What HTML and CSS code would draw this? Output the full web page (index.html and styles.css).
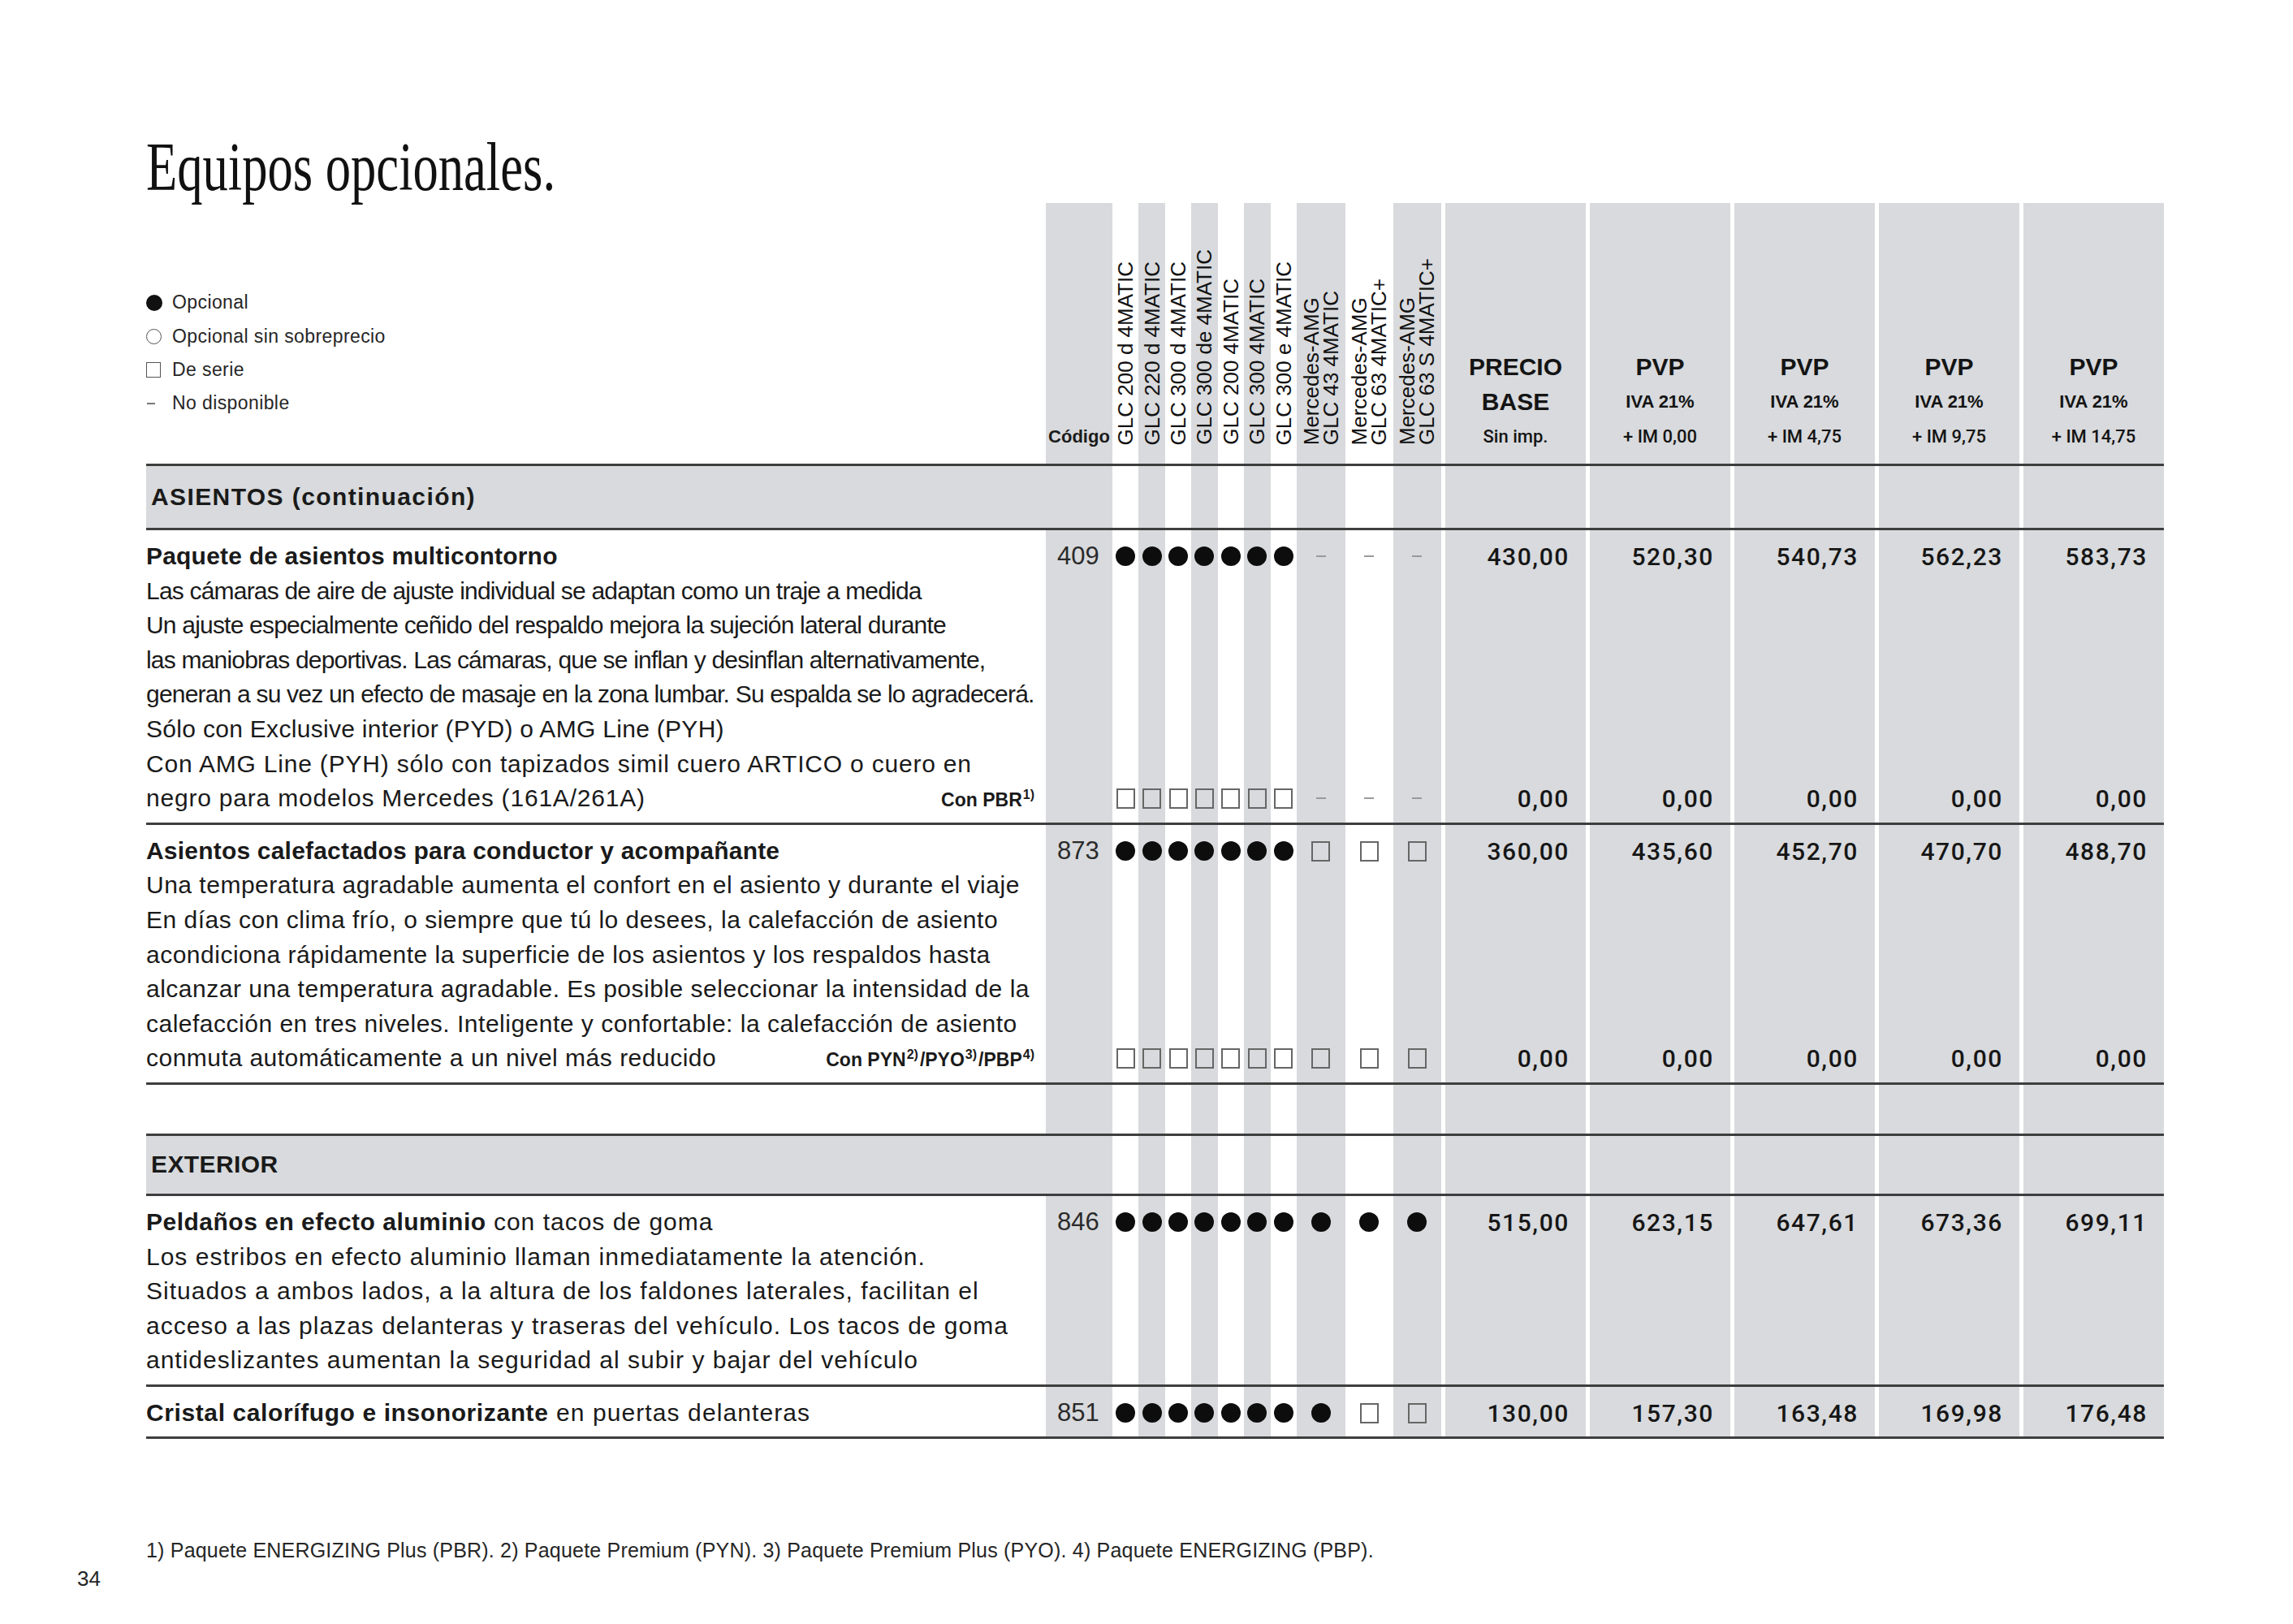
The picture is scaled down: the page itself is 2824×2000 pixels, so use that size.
FILE: index.html
```html
<!DOCTYPE html>
<html lang="es">
<head>
<meta charset="utf-8">
<title>Equipos opcionales</title>
<link rel="stylesheet" href="styles.css">
</head>
<body>
<div class="page">
  <h1 class="title">Equipos opcionales.</h1>

  <div class="table">
    <!-- header -->
    <div class="row head">
      <div class="desc">
        <div class="legend">
          <div class="lg"><span class="mk"><i class="ldot"></i></span>Opcional</div>
          <div class="lg"><span class="mk"><i class="lcirc"></i></span>Opcional sin sobreprecio</div>
          <div class="lg"><span class="mk"><i class="lsq"></i></span>De serie</div>
          <div class="lg"><span class="mk"><i class="ldash"></i></span>No disponible</div>
        </div>
      </div>
      <div class="s codeh"><span>Código</span></div>
      <div class="vh"><span class="vt">GLC 200 d 4MATIC</span></div>
      <div class="s vh"><span class="vt">GLC 220 d 4MATIC</span></div>
      <div class="vh"><span class="vt">GLC 300 d 4MATIC</span></div>
      <div class="s vh"><span class="vt">GLC 300 de 4MATIC</span></div>
      <div class="vh"><span class="vt">GLC 200 4MATIC</span></div>
      <div class="s vh"><span class="vt">GLC 300 4MATIC</span></div>
      <div class="vh"><span class="vt">GLC 300 e 4MATIC</span></div>
      <div class="s vh"><span class="vt">Mercedes-AMG<br>GLC 43 4MATIC</span></div>
      <div class="vh"><span class="vt">Mercedes-AMG<br>GLC 63 4MATIC+</span></div>
      <div class="s vh"><span class="vt">Mercedes-AMG<br>GLC 63 S 4MATIC+</span></div>
      <div class="p ph"><span class="big">PRECIO</span><span class="big">BASE</span><span class="sm">Sin imp.</span></div>
      <div class="p ph"><span class="big">PVP</span><span class="smb">IVA 21%</span><span class="sm">+ IM 0,00</span></div>
      <div class="p ph"><span class="big">PVP</span><span class="smb">IVA 21%</span><span class="sm">+ IM 4,75</span></div>
      <div class="p ph"><span class="big">PVP</span><span class="smb">IVA 21%</span><span class="sm">+ IM 9,75</span></div>
      <div class="p ph"><span class="big">PVP</span><span class="smb">IVA 21%</span><span class="sm">+ IM 14,75</span></div>
    </div>

    <!-- section ASIENTOS -->
    <div class="row band b1">
      <div class="s desc sect sect-a">ASIENTOS (continuación)</div>
      <div class="s"></div>
      <div></div><div class="s"></div><div></div><div class="s"></div><div></div><div class="s"></div><div></div>
      <div class="s"></div><div></div><div class="s"></div>
      <div class="p"></div><div class="p"></div><div class="p"></div><div class="p"></div><div class="p"></div>
    </div>

    <!-- item 409 -->
    <div class="row item">
      <div class="desc">
        <div class="ln t">Paquete de asientos multicontorno</div>
        <div class="ln r1">Las cámaras de aire de ajuste individual se adaptan como un traje a medida</div>
        <div class="ln r1">Un ajuste especialmente ceñido del respaldo mejora la sujeción lateral durante</div>
        <div class="ln r1">las maniobras deportivas. Las cámaras, que se inflan y desinflan alternativamente,</div>
        <div class="ln r1">generan a su vez un efecto de masaje en la zona lumbar. Su espalda se lo agradecerá.</div>
        <div class="ln r1b">Sólo con Exclusive interior (PYD) o AMG Line (PYH)</div>
        <div class="ln">Con AMG Line (PYH) sólo con tapizados simil cuero ARTICO o cuero en</div>
        <div class="ln last"><span>negro para modelos Mercedes (161A/261A)</span><span class="con">Con PBR<sup>1)</sup></span></div>
      </div>
      <div class="s code"><div class="slot">409</div></div>
      <div class="sym"><div class="slot"><i class="dot"></i></div><div class="slot"><i class="sq"></i></div></div>
      <div class="s sym"><div class="slot"><i class="dot"></i></div><div class="slot"><i class="sq"></i></div></div>
      <div class="sym"><div class="slot"><i class="dot"></i></div><div class="slot"><i class="sq"></i></div></div>
      <div class="s sym"><div class="slot"><i class="dot"></i></div><div class="slot"><i class="sq"></i></div></div>
      <div class="sym"><div class="slot"><i class="dot"></i></div><div class="slot"><i class="sq"></i></div></div>
      <div class="s sym"><div class="slot"><i class="dot"></i></div><div class="slot"><i class="sq"></i></div></div>
      <div class="sym"><div class="slot"><i class="dot"></i></div><div class="slot"><i class="sq"></i></div></div>
      <div class="s sym"><div class="slot"><i class="dash"></i></div><div class="slot"><i class="dash"></i></div></div>
      <div class="sym"><div class="slot"><i class="dash"></i></div><div class="slot"><i class="dash"></i></div></div>
      <div class="s sym"><div class="slot"><i class="dash"></i></div><div class="slot"><i class="dash"></i></div></div>
      <div class="p price"><div class="slot">430,00</div><div class="slot">0,00</div></div>
      <div class="p price"><div class="slot">520,30</div><div class="slot">0,00</div></div>
      <div class="p price"><div class="slot">540,73</div><div class="slot">0,00</div></div>
      <div class="p price"><div class="slot">562,23</div><div class="slot">0,00</div></div>
      <div class="p price"><div class="slot">583,73</div><div class="slot">0,00</div></div>
    </div>

    <!-- item 873 -->
    <div class="row item">
      <div class="desc r2">
        <div class="ln t">Asientos calefactados para conductor y acompañante</div>
        <div class="ln">Una temperatura agradable aumenta el confort en el asiento y durante el viaje</div>
        <div class="ln">En días con clima frío, o siempre que tú lo desees, la calefacción de asiento</div>
        <div class="ln">acondiciona rápidamente la superficie de los asientos y los respaldos hasta</div>
        <div class="ln">alcanzar una temperatura agradable. Es posible seleccionar la intensidad de la</div>
        <div class="ln">calefacción en tres niveles. Inteligente y confortable: la calefacción de asiento</div>
        <div class="ln last"><span>conmuta automáticamente a un nivel más reducido</span><span class="con">Con PYN<sup>2)</sup>/PYO<sup>3)</sup>/PBP<sup>4)</sup></span></div>
      </div>
      <div class="s code"><div class="slot">873</div></div>
      <div class="sym"><div class="slot"><i class="dot"></i></div><div class="slot"><i class="sq"></i></div></div>
      <div class="s sym"><div class="slot"><i class="dot"></i></div><div class="slot"><i class="sq"></i></div></div>
      <div class="sym"><div class="slot"><i class="dot"></i></div><div class="slot"><i class="sq"></i></div></div>
      <div class="s sym"><div class="slot"><i class="dot"></i></div><div class="slot"><i class="sq"></i></div></div>
      <div class="sym"><div class="slot"><i class="dot"></i></div><div class="slot"><i class="sq"></i></div></div>
      <div class="s sym"><div class="slot"><i class="dot"></i></div><div class="slot"><i class="sq"></i></div></div>
      <div class="sym"><div class="slot"><i class="dot"></i></div><div class="slot"><i class="sq"></i></div></div>
      <div class="s sym"><div class="slot"><i class="sq"></i></div><div class="slot"><i class="sq"></i></div></div>
      <div class="sym"><div class="slot"><i class="sq"></i></div><div class="slot"><i class="sq"></i></div></div>
      <div class="s sym"><div class="slot"><i class="sq"></i></div><div class="slot"><i class="sq"></i></div></div>
      <div class="p price"><div class="slot">360,00</div><div class="slot">0,00</div></div>
      <div class="p price"><div class="slot">435,60</div><div class="slot">0,00</div></div>
      <div class="p price"><div class="slot">452,70</div><div class="slot">0,00</div></div>
      <div class="p price"><div class="slot">470,70</div><div class="slot">0,00</div></div>
      <div class="p price"><div class="slot">488,70</div><div class="slot">0,00</div></div>
    </div>

    <!-- spacer -->
    <div class="row spacer">
      <div class="desc"></div>
      <div class="s"></div>
      <div></div><div class="s"></div><div></div><div class="s"></div><div></div><div class="s"></div><div></div>
      <div class="s"></div><div></div><div class="s"></div>
      <div class="p"></div><div class="p"></div><div class="p"></div><div class="p"></div><div class="p"></div>
    </div>

    <!-- section EXTERIOR -->
    <div class="row band b2">
      <div class="s desc sect">EXTERIOR</div>
      <div class="s"></div>
      <div></div><div class="s"></div><div></div><div class="s"></div><div></div><div class="s"></div><div></div>
      <div class="s"></div><div></div><div class="s"></div>
      <div class="p"></div><div class="p"></div><div class="p"></div><div class="p"></div><div class="p"></div>
    </div>

    <!-- item 846 -->
    <div class="row item">
      <div class="desc r3">
        <div class="ln"><b class="tb">Peldaños en efecto aluminio</b> con tacos de goma</div>
        <div class="ln">Los estribos en efecto aluminio llaman inmediatamente la atención.</div>
        <div class="ln">Situados a ambos lados, a la altura de los faldones laterales, facilitan el</div>
        <div class="ln">acceso a las plazas delanteras y traseras del vehículo. Los tacos de goma</div>
        <div class="ln">antideslizantes aumentan la seguridad al subir y bajar del vehículo</div>
      </div>
      <div class="s code"><div class="slot">846</div></div>
      <div class="sym"><div class="slot"><i class="dot"></i></div></div>
      <div class="s sym"><div class="slot"><i class="dot"></i></div></div>
      <div class="sym"><div class="slot"><i class="dot"></i></div></div>
      <div class="s sym"><div class="slot"><i class="dot"></i></div></div>
      <div class="sym"><div class="slot"><i class="dot"></i></div></div>
      <div class="s sym"><div class="slot"><i class="dot"></i></div></div>
      <div class="sym"><div class="slot"><i class="dot"></i></div></div>
      <div class="s sym"><div class="slot"><i class="dot"></i></div></div>
      <div class="sym"><div class="slot"><i class="dot"></i></div></div>
      <div class="s sym"><div class="slot"><i class="dot"></i></div></div>
      <div class="p price"><div class="slot">515,00</div></div>
      <div class="p price"><div class="slot">623,15</div></div>
      <div class="p price"><div class="slot">647,61</div></div>
      <div class="p price"><div class="slot">673,36</div></div>
      <div class="p price"><div class="slot">699,11</div></div>
    </div>

    <!-- item 851 -->
    <div class="row item">
      <div class="desc r4">
        <div class="ln"><b class="tb">Cristal calorífugo e insonorizante</b> en puertas delanteras</div>
      </div>
      <div class="s code"><div class="slot">851</div></div>
      <div class="sym"><div class="slot"><i class="dot"></i></div></div>
      <div class="s sym"><div class="slot"><i class="dot"></i></div></div>
      <div class="sym"><div class="slot"><i class="dot"></i></div></div>
      <div class="s sym"><div class="slot"><i class="dot"></i></div></div>
      <div class="sym"><div class="slot"><i class="dot"></i></div></div>
      <div class="s sym"><div class="slot"><i class="dot"></i></div></div>
      <div class="sym"><div class="slot"><i class="dot"></i></div></div>
      <div class="s sym"><div class="slot"><i class="dot"></i></div></div>
      <div class="sym"><div class="slot"><i class="sq"></i></div></div>
      <div class="s sym"><div class="slot"><i class="sq"></i></div></div>
      <div class="p price"><div class="slot">130,00</div></div>
      <div class="p price"><div class="slot">157,30</div></div>
      <div class="p price"><div class="slot">163,48</div></div>
      <div class="p price"><div class="slot">169,98</div></div>
      <div class="p price"><div class="slot">176,48</div></div>
    </div>
  </div>

  <p class="foot">1) Paquete ENERGIZING Plus (PBR). 2) Paquete Premium (PYN). 3) Paquete Premium Plus (PYO). 4) Paquete ENERGIZING (PBP).</p>
  <p class="pageno">34</p>
</div>
</body>
</html>
```

FILE: styles.css
```css
* { box-sizing: border-box; margin: 0; padding: 0; }

html, body { background: #ffffff; }

body {
  width: 2824px;
  height: 2000px;
  overflow: hidden;
  font-family: "Liberation Sans", Arial, sans-serif;
  color: #1c1c1c;
}

.page {
  padding: 164px 0 0 180px;
}

.title {
  font-family: "Liberation Serif", "Times New Roman", serif;
  font-weight: normal;
  font-size: 84px;
  line-height: 84px;
  height: 86px;
  white-space: nowrap;
  color: #111;
  transform: scaleX(0.745);
  transform-origin: left top;
}

.table { width: 2485px; }

.row {
  display: grid;
  grid-template-columns: 1108px 82px repeat(7, 1fr) 60px 59px 59px repeat(5, 178px);
  border-bottom: 3px solid #3e3e3e;
}

.s { background: #d8dadd; }
.p { background: #d8dadd; border-left: 5px solid #ffffff; }

/* header */
.head { height: 324px; }
.legend { padding-top: 102px; }
.lg {
  display: flex;
  align-items: center;
  height: 41.4px;
  font-size: 23px;
  letter-spacing: 0.4px;
  color: #262626;
  white-space: nowrap;
}
.mk { width: 32px; display: flex; align-items: center; }
.ldot { display: block; width: 20px; height: 20px; border-radius: 50%; background: #111; }
.lcirc { display: block; width: 19px; height: 19px; border-radius: 50%; border: 1.5px solid #555; }
.lsq { display: block; width: 18px; height: 19px; border: 1.5px solid #555; }
.ldash { display: block; width: 10px; height: 2px; background: #777; margin-left: 1px; }

.codeh {
  display: flex;
  align-items: flex-end;
  justify-content: center;
  padding-bottom: 22px;
  font-size: 22px;
  line-height: 22px;
  font-weight: bold;
}

.vh {
  display: flex;
  align-items: flex-end;
  justify-content: center;
  padding-bottom: 23px;
}
.vt {
  writing-mode: vertical-rl;
  transform: rotate(180deg);
  font-size: 26px;
  line-height: 24px;
  white-space: nowrap;
  color: #111;
}

.ph {
  display: flex;
  flex-direction: column;
  justify-content: flex-end;
  align-items: center;
  padding-bottom: 12px;
  color: #141414;
}
.ph .big { font-size: 30px; font-weight: bold; line-height: 43px; }
.ph .smb { font-size: 22px; font-weight: bold; line-height: 43px; }
.ph .sm { font-family: Roboto, "Liberation Sans", sans-serif; font-size: 22px; font-weight: 500; line-height: 43px; }

/* section bands */
.b1 { height: 79px; }
.b2 { height: 77px; border-top: 3px solid #3e3e3e; }
.sect {
  display: flex;
  align-items: center;
  padding-left: 6px;
  font-size: 30px;
  font-weight: bold;
  letter-spacing: 0.4px;
  color: #1a1a1a;
}
.sect-a { letter-spacing: 1.4px; }

.spacer { height: 60px; border-bottom: none; }

/* items */
.item > * { padding-top: 11px; padding-bottom: 8px; }

.ln {
  height: 42.6px;
  line-height: 42.6px;
  font-size: 30px;
  letter-spacing: 0.8px;
  white-space: nowrap;
  color: #1a1a1a;
}
.ln.t { font-weight: bold; letter-spacing: 0.2px; }
.tb { font-weight: bold; letter-spacing: 0.2px; }
.ln.r1 { letter-spacing: -0.8px; }
.ln.r1b { letter-spacing: 0.3px; }
.r2 .ln { letter-spacing: 0.5px; }
.r2 .ln.t { letter-spacing: 0.2px; }
.r3 .ln { letter-spacing: 1px; }
.r3 .tb { letter-spacing: 0.5px; }
.r4 .ln { letter-spacing: 1.1px; }
.r4 .tb { letter-spacing: 0.6px; }
.ln.last { display: flex; justify-content: space-between; align-items: baseline; padding-right: 12px; }
.con { font-size: 23px; font-weight: bold; letter-spacing: 0; }
.con sup { font-size: 16px; vertical-align: 9px; line-height: 0; margin-left: 1px; margin-right: 2px; }

.slot {
  height: 42.6px;
  display: flex;
  align-items: center;
  justify-content: center;
}

.code .slot {
  justify-content: flex-start;
  padding-left: 14px;
  font-size: 31px;
  color: #2a2a2a;
}

.sym {
  display: flex;
  flex-direction: column;
  justify-content: space-between;
}

.price {
  display: flex;
  flex-direction: column;
  justify-content: space-between;
}
.price .slot {
  justify-content: flex-end;
  padding-right: 20px;
  font-family: Roboto, "Liberation Sans", sans-serif;
  font-weight: 500;
  font-size: 30px;
  letter-spacing: 1.6px;
  color: #161616;
}

.dot { display: block; width: 24px; height: 24px; border-radius: 50%; background: #0d0d0d; }
.sq { display: block; width: 23px; height: 25px; border: 2px solid #666; }
.dash { display: block; width: 12px; height: 2px; background: #9a9a9a; }

/* footer */
.foot {
  margin-top: 122px;
  font-size: 25px;
  line-height: 30px;
  letter-spacing: 0.2px;
  color: #262626;
  white-space: nowrap;
}
.pageno {
  margin-left: -85px;
  margin-top: 5px;
  font-size: 26px;
  line-height: 30px;
  color: #262626;
}
```
